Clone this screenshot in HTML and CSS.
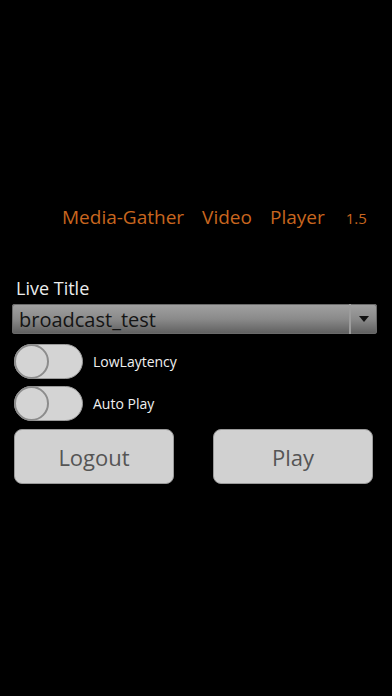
FILE: index.html
```html
<!DOCTYPE html>
<html>
<head>
    <title>Media-Gather Video Player</title>
    <link rel="stylesheet" href="styles.css">
</head>
<body>
    <div class="screen">
      <div class="header">
        <span class="header-word">Media-Gather</span>
        <span class="header-word">Video</span>
        <span class="header-word">Player</span>
        <span class="version">1.5</span>
      </div>

      <p class="label">Live Title</p>
      <div class="select">
        <span class="select-value">broadcast_test</span>
        <span class="select-arrow">
          <svg width="10" height="6" viewBox="0 0 10 6"><path d="M0 0 L10 0 L5 6 Z" fill="#111"/></svg>
        </span>
      </div>

      <div class="option">
        <div class="switch"><div class="knob"></div></div>
        <span class="option-label">LowLaytency</span>
      </div>
      <div class="option">
        <div class="switch"><div class="knob"></div></div>
        <span class="option-label">Auto Play</span>
      </div>

      <div class="buttons">
        <button class="btn">Logout</button>
        <button class="btn">Play</button>
      </div>
    </div>
</body>
</html>
```

FILE: styles.css
```css
html, body {
  margin: 0;
  background: #000;
  height: 100%;
}

.screen {
  font-family: "Open Sans", "Noto Sans", sans-serif;
  padding: 204px 0 0 0;
}

.header {
  display: flex;
  align-items: baseline;
  padding-left: 62px;
  color: #c8661f;
  font-size: 19px;
  height: 30px;
}

.header-word {
  margin-right: 18px;
}

.version {
  font-size: 15px;
  margin-left: 3px;
}

.label {
  margin: 42px 0 0 16px;
  color: #ececec;
  font-size: 18px;
  line-height: 24px;
}

.select {
  display: flex;
  align-items: center;
  margin: 4px 15px 0 12px;
  height: 30px;
  border-radius: 3px;
  background: linear-gradient(#a2a2a2, #8a8a8a 50%, #5e5e5e);
  box-shadow: inset 0 0 0 1px #6a6a6a;
}

.select-value {
  flex: 1;
  padding-left: 7px;
  color: #141414;
  font-size: 20px;
}

.select-arrow {
  display: flex;
  align-items: center;
  justify-content: center;
  width: 26px;
  height: 100%;
  border-left: 2px solid #9c9c9c;
}

.option {
  display: flex;
  align-items: center;
  margin: 10px 0 0 14px;
}

.option + .option {
  margin-top: 7px;
}

.switch {
  position: relative;
  width: 69px;
  height: 35px;
  box-sizing: border-box;
  border-radius: 18px;
  background: #d4d4d4;
  border: 1px solid #9a9a9a;
}

.knob {
  position: absolute;
  left: -1px;
  top: -1px;
  width: 35px;
  height: 35px;
  box-sizing: border-box;
  border-radius: 50%;
  background: #d4d4d4;
  border: 2px solid #8c8c8c;
}

.option-label {
  margin-left: 10px;
  color: #f0f0f0;
  font-size: 14px;
}

.buttons {
  display: flex;
  gap: 39px;
  margin: 8px 0 0 14px;
}

.btn {
  width: 160px;
  height: 55px;
  border: 1px solid #9a9a9a;
  border-radius: 8px;
  background: #d1d1d1;
  color: #555;
  font-family: "Open Sans", "Noto Sans", sans-serif;
  font-size: 22px;
}
```
